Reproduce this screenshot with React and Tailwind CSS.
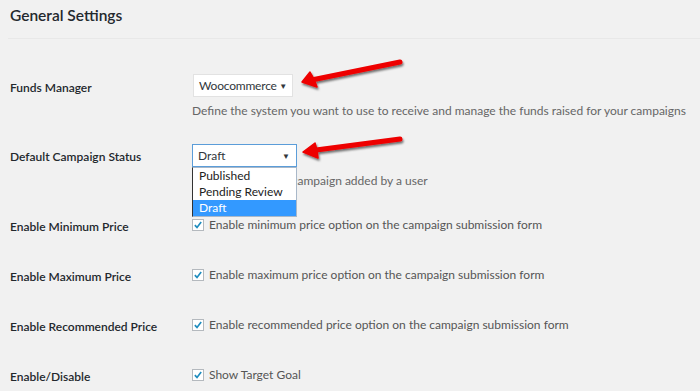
import React from 'react';

const font = { fontFamily: 'Lato, "Open Sans", sans-serif' };

const Check = () => (
  <span className="flex h-[12px] w-[12px] shrink-0 items-center justify-center border border-[#b4b9be] bg-white">
    <svg width="12" height="12" viewBox="0 0 12 12">
      <path d="M2.2 6.2 L4.8 8.9 L9.8 2.4" fill="none" stroke="#1e8cbe" strokeWidth="2" />
    </svg>
  </span>
);

const Caret = () => <span className="text-[8px] leading-none text-[#32373c]">▼</span>;

const CheckRow = ({ label, text }) => (
  <div className="flex h-[50px]">
    <div className="w-[182px] shrink-0 pt-[28px] text-[12px] leading-[18px] font-semibold text-[#23282d]">{label}</div>
    <label className="flex h-[18px] items-center gap-[5px] mt-[26px] text-[12px] leading-[18px] text-[#555]">
      <Check />
      <span>{text}</span>
    </label>
  </div>
);

export default function App() {
  return (
    <div className="relative h-[391px] w-[700px] overflow-hidden bg-[#f1f1f1] pl-[10px]" style={font}>
      <div className="h-[39px] border-b border-[#e8e8e8] -ml-[2px] pl-[2px]">
        <h1 className="pt-[4px] text-[15.5px] leading-[22px] font-semibold text-[#23282d]">General Settings</h1>
      </div>

      <div className="flex h-[81px]">
        <div className="w-[182px] shrink-0 pt-[40px] text-[12px] leading-[18px] font-semibold text-[#23282d]">Funds Manager</div>
        <div className="pt-[35px]">
          <div className="ml-[1px] flex h-[23px] w-[100px] items-center justify-between border border-[#e2e2e2] bg-white pl-[5px] pr-[5px] text-[12px] tracking-[-0.2px] text-[#32373c]">
            <span>Woocommerce</span>
            <Caret />
          </div>
          <p className="mt-[5px] text-[12px] leading-[18px] text-[#666]">
            Define the system you want to use to receive and manage the funds raised for your campaigns
          </p>
        </div>
      </div>

      <div className="flex h-[70px]">
        <div className="w-[182px] shrink-0 pt-[28px] text-[12px] leading-[18px] font-semibold text-[#23282d]">Default Campaign Status</div>
        <div className="pt-[24px]">
          <div className="relative">
            <div className="flex h-[23px] w-[105px] items-center justify-between border border-[#5b9dd9] bg-white pl-[5px] pr-[6px] text-[12px] text-[#32373c]">
              <span>Draft</span>
              <Caret />
            </div>
            <ul className="absolute left-0 top-full z-10 w-[105px] border border-[#a9b8c9] border-l-[#333] bg-white text-[12px] leading-[16px] text-[#222]">
              <li className="pl-[6px]">Published</li>
              <li className="pl-[6px]">Pending Review</li>
              <li className="bg-[#3399ff] pl-[6px] text-white">Draft</li>
            </ul>
          </div>
          <p className="mt-[5px] text-[12px] leading-[18px] text-[#666]">Default status of a campaign added by a user</p>
        </div>
      </div>

      <CheckRow label="Enable Minimum Price" text="Enable minimum price option on the campaign submission form" />
      <CheckRow label="Enable Maximum Price" text="Enable maximum price option on the campaign submission form" />
      <CheckRow label="Enable Recommended Price" text="Enable recommended price option on the campaign submission form" />
      <CheckRow label="Enable/Disable" text="Show Target Goal" />

      <svg className="pointer-events-none absolute left-0 top-0" width="700" height="391">
        <defs>
          <filter id="sh" x="-20%" y="-50%" width="140%" height="200%">
            <feDropShadow dx="1" dy="2" stdDeviation="1.2" floodColor="#000" floodOpacity="0.55" />
          </filter>
        </defs>
        <g filter="url(#sh)" fill="#ee0000" stroke="#ee0000" strokeLinecap="round" strokeLinejoin="round">
          <line x1="400" y1="62" x2="314" y2="79.5" strokeWidth="5" />
          <polygon points="302,82 310,72 314,79 317,87" strokeWidth="1.5" />
          <line x1="400" y1="139" x2="316" y2="150" strokeWidth="5" />
          <polygon points="303,152 315,143 317,150 318,158" strokeWidth="1.5" />
        </g>
      </svg>
    </div>
  );
}
